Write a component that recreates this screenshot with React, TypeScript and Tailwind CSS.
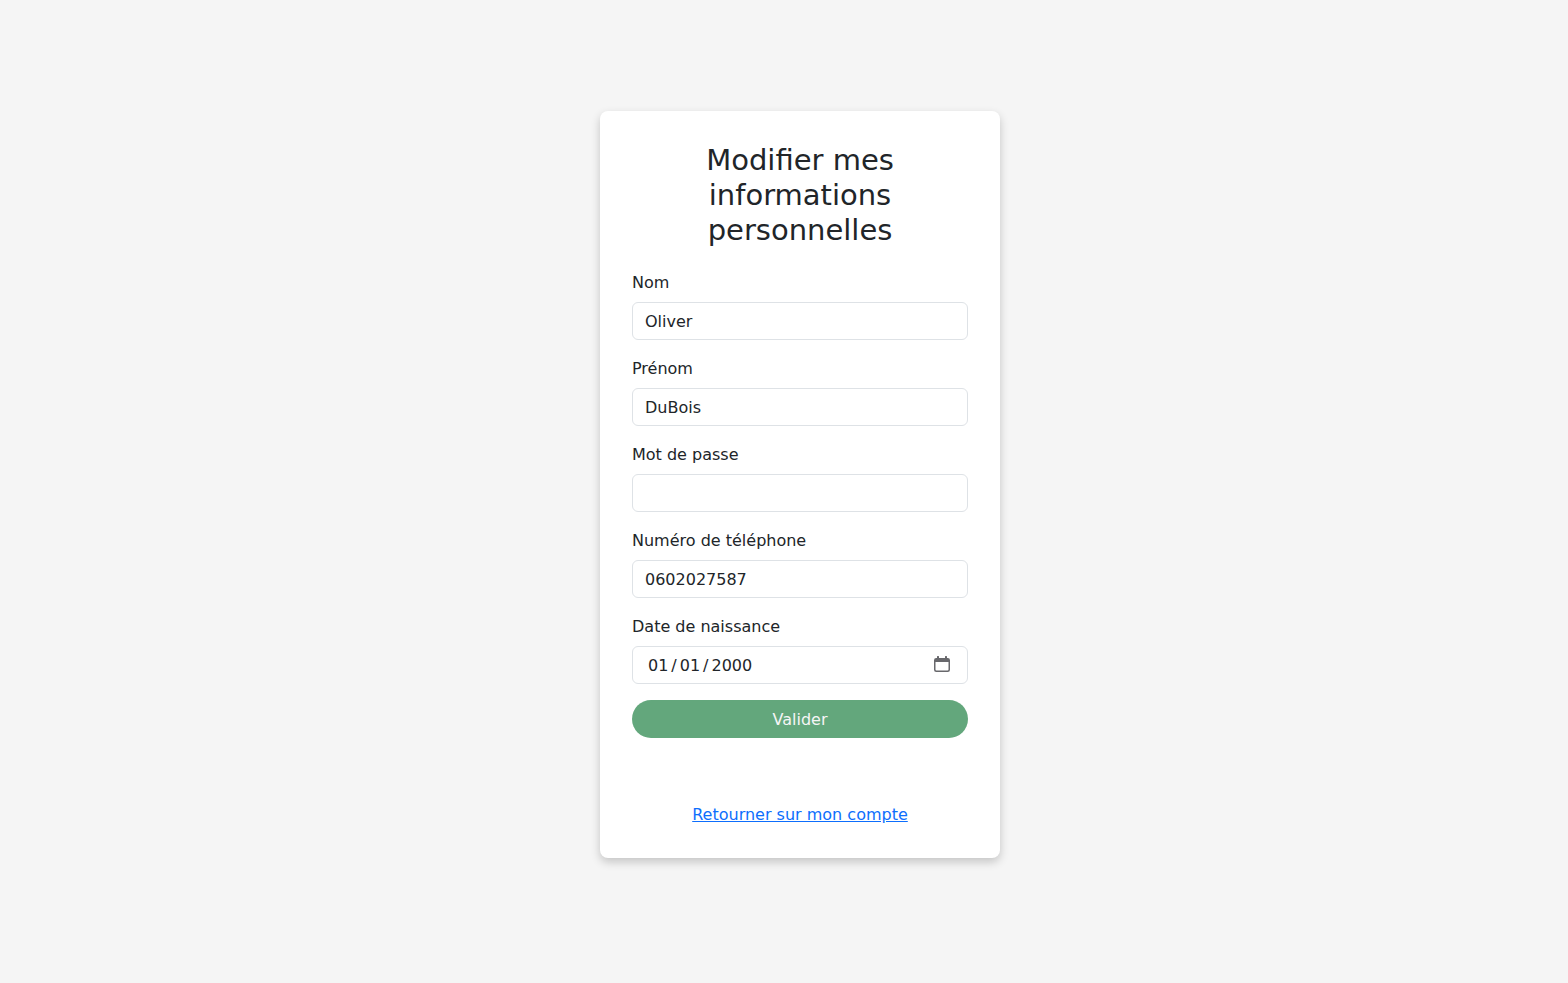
import type { InputHTMLAttributes } from "react";

type FieldProps = InputHTMLAttributes<HTMLInputElement> & { id: string; label: string };

function CalendarIcon() {
  return (
    <svg
      viewBox="0 0 16 16"
      aria-hidden="true"
      className="pointer-events-none absolute top-2.5 right-[18px] size-4 text-[#68686c]"
    >
      <path
        fill="currentColor"
        fillRule="evenodd"
        d="M3 .9a.9.9 0 0 1 2 0V2h6V.9a.9.9 0 0 1 2 0V2h.75A2.25 2.25 0 0 1 16 4.25v9.5A2.25 2.25 0 0 1 13.75 16H2.25A2.25 2.25 0 0 1 0 13.75v-9.5A2.25 2.25 0 0 1 2.25 2H3ZM1.5 6v7.5a1 1 0 0 0 1 1h11a1 1 0 0 0 1-1V6Z"
      />
    </svg>
  );
}

function Field({ id, label, ...input }: FieldProps) {
  return (
    <div className="mb-4">
      <label htmlFor={id} className="mb-1.5 block leading-[26px]">
        {label}
      </label>
      <div className="relative">
        <input
          id={id}
          name={id}
          className="block h-[38px] w-full rounded-md border border-[#dee2e6] bg-white px-3 pt-[7px] pb-1.5 text-base text-[#212529] outline-none focus:border-[#86b7fe] [&::-webkit-calendar-picker-indicator]:opacity-0 [&::-webkit-datetime-edit]:pl-0.5 [&::-webkit-datetime-edit-text]:px-0.5"
          {...input}
        />
        {input.type === "date" && <CalendarIcon />}
      </div>
    </div>
  );
}

export default function App() {
  return (
    <div className="flex min-h-screen items-center justify-center bg-[#f5f5f5] pb-[14px] pl-8 font-['DejaVu_Sans',sans-serif] text-base text-[#212529]">
      <main className="w-full max-w-[400px] rounded-lg bg-white p-8 shadow-[0_4px_10px_rgba(0,0,0,0.2)]">
        <h1 className="mb-[22px] text-center text-[29px] leading-[35px] font-medium">
          Modifier mes informations personnelles
        </h1>
        <form onSubmit={(event) => event.preventDefault()}>
          <Field id="nom" label="Nom" type="text" defaultValue="Oliver" />
          <Field id="prenom" label="Prénom" type="text" defaultValue="DuBois" />
          <Field id="password" label="Mot de passe" type="password" />
          <Field id="telephone" label="Numéro de téléphone" type="tel" defaultValue="0602027587" />
          <Field id="naissance" label="Date de naissance" type="date" defaultValue="2000-01-01" />
          <button
            type="submit"
            className="h-[38px] w-full rounded-full bg-[#63a77c] pt-0.5 text-[#f5f5f5]"
          >
            Valider
          </button>
        </form>
        <p className="-mb-0.5 mt-16 text-center leading-[26px]">
          <a href="#compte" className="text-[#0d6efd] underline">
            Retourner sur mon compte
          </a>
        </p>
      </main>
    </div>
  );
}
